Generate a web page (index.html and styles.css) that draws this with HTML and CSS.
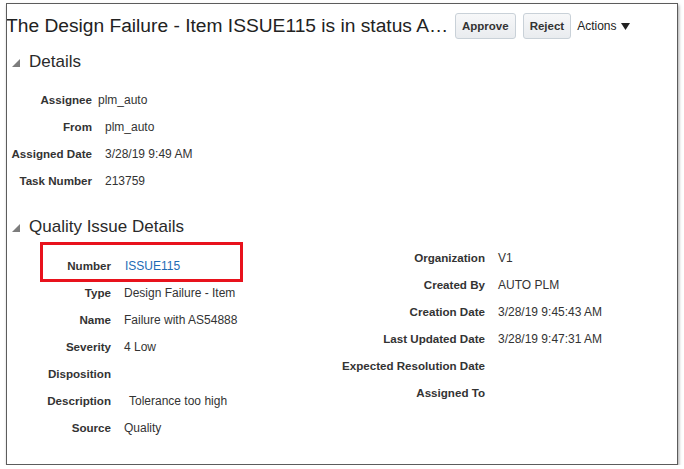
FILE: index.html
```html
<!DOCTYPE html>
<html>
<head>
<meta charset="utf-8">
<link rel="stylesheet" href="styles.css">
</head>
<body>
<div class="frame">
  <div class="header">
    <h1 class="title">The Design Failure - Item ISSUE115 is in status A…</h1>
    <button class="btn">Approve</button>
    <button class="btn">Reject</button>
    <span class="actions">Actions <svg class="caret" width="9" height="7" viewBox="0 0 9 7"><polygon points="0,0 9,0 4.5,7" fill="#222"/></svg></span>
  </div>

  <div class="section-head details-head">
    <svg class="disclosure" width="8" height="8" viewBox="0 0 8 8"><polygon points="8,0 8,8 0,8" fill="#7d7d7d"/></svg>
    <h2>Details</h2>
  </div>
  <div class="form details-form">
    <div class="row"><span class="label">Assignee</span><span class="value tight">plm_auto</span></div>
    <div class="row"><span class="label">From</span><span class="value">plm_auto</span></div>
    <div class="row"><span class="label">Assigned Date</span><span class="value">3/28/19 9:49 AM</span></div>
    <div class="row"><span class="label">Task Number</span><span class="value">213759</span></div>
  </div>

  <div class="section-head quality-head">
    <svg class="disclosure" width="8" height="8" viewBox="0 0 8 8"><polygon points="8,0 8,8 0,8" fill="#7d7d7d"/></svg>
    <h2>Quality Issue Details</h2>
  </div>
  <div class="quality">
    <div class="form col-left">
      <div class="row highlighted"><span class="label">Number</span><span class="value link">ISSUE115</span></div>
      <div class="row"><span class="label">Type</span><span class="value">Design Failure - Item</span></div>
      <div class="row"><span class="label">Name</span><span class="value">Failure with AS54888</span></div>
      <div class="row"><span class="label">Severity</span><span class="value">4 Low</span></div>
      <div class="row"><span class="label">Disposition</span><span class="value"></span></div>
      <div class="row"><span class="label">Description</span><span class="value indent">Tolerance too high</span></div>
      <div class="row"><span class="label">Source</span><span class="value">Quality</span></div>
    </div>
    <div class="form col-right">
      <div class="row"><span class="label">Organization</span><span class="value">V1</span></div>
      <div class="row"><span class="label">Created By</span><span class="value">AUTO PLM</span></div>
      <div class="row"><span class="label">Creation Date</span><span class="value">3/28/19 9:45:43 AM</span></div>
      <div class="row"><span class="label">Last Updated Date</span><span class="value">3/28/19 9:47:31 AM</span></div>
      <div class="row"><span class="label">Expected Resolution Date</span><span class="value"></span></div>
      <div class="row"><span class="label">Assigned To</span><span class="value"></span></div>
    </div>
  </div>
</div>
</body>
</html>
```

FILE: styles.css
```css
html, body {
  margin: 0;
  padding: 0;
  background: #fff;
}
body {
  font-family: "Liberation Sans", Arial, Helvetica, sans-serif;
  color: #333;
}
.frame {
  margin: 3px 0 0 6px;
  width: 670px;
  height: 460px;
  border: 1px solid #5c5c5c;
  box-shadow: 1px 2px 3px rgba(0, 0, 0, 0.35);
  background: #fff;
  overflow: hidden;
  box-sizing: content-box;
}
.header {
  display: flex;
  align-items: center;
  height: 26px;
  margin-top: 9px;
}
.title {
  margin: 0 0 0 -1px;
  font-size: 19.2px;
  font-weight: normal;
  color: #222;
  line-height: 24px;
  white-space: nowrap;
  width: 443px;
  flex: 0 0 443px;
  overflow: hidden;
}
.btn {
  margin-left: 6px;
  height: 26px;
  padding: 0 6px;
  border: 1px solid #c9d1d8;
  border-radius: 3px;
  background: linear-gradient(#f7f8f9, #e9ecef);
  font-family: "Liberation Sans", Arial, sans-serif;
  font-weight: bold;
  font-size: 11.5px;
  color: #333;
}
.btn + .btn {
  margin-left: 7px;
}
.actions {
  margin-left: 6px;
  font-size: 12px;
  color: #222;
  display: flex;
  align-items: center;
  gap: 4px;
}
.section-head {
  display: flex;
  align-items: center;
  height: 20px;
}
.details-head {
  margin-top: 13px;
}
.quality-head {
  margin-top: 23px;
}
.disclosure {
  margin-left: 5px;
  margin-right: 9px;
  margin-top: 2px;
}
.section-head h2 {
  margin: 0;
  font-size: 17px;
  font-weight: normal;
  color: #2a2a2a;
  line-height: 20px;
}
.form {
  display: grid;
  grid-auto-rows: 27px;
  align-items: center;
}
.row {
  display: contents;
}
.label {
  font-size: 11.6px;
  font-weight: bold;
  color: #333;
  text-align: right;
  white-space: nowrap;
}
.value {
  font-size: 12px;
  color: #333;
  white-space: nowrap;
}
.details-form {
  margin-top: 14px;
  grid-template-columns: 85px auto;
  column-gap: 13px;
}
.value.tight {
  margin-left: -7px;
}
.quality {
  display: grid;
  grid-template-columns: 333px auto;
  padding-top: 7px;
}
.col-left {
  padding-top: 8px;
  grid-template-columns: 104px auto;
  column-gap: 13px;
  align-content: start;
}
.col-right {
  grid-template-columns: 145px auto;
  column-gap: 13px;
  align-content: start;
}
.highlighted {
  position: relative;
  grid-column: 1 / -1;
  display: grid;
  grid-template-columns: 104px auto;
  column-gap: 13px;
  align-items: center;
  height: 27px;
}
.highlighted::after {
  content: "";
  position: absolute;
  left: 33px;
  top: -10px;
  width: 197px;
  height: 34px;
  border: 3px solid #e8121c;
}
.link {
  color: #1d6bb5;
  margin-left: 1px;
}
.indent {
  margin-left: 5px;
}
```
